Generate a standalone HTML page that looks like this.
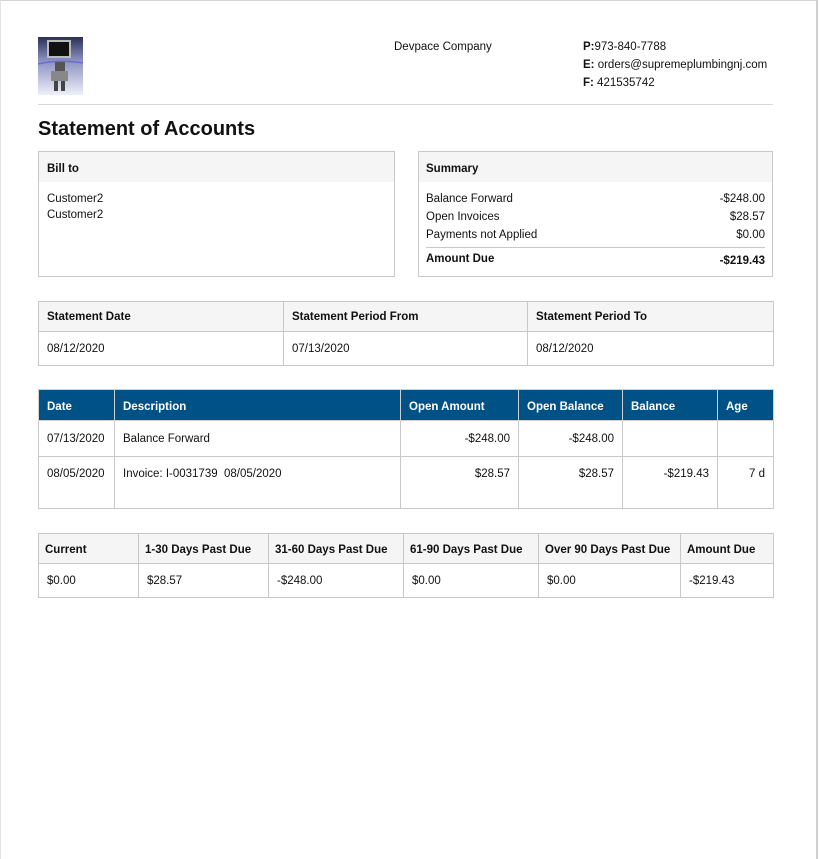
<!DOCTYPE html>
<html><head><meta charset="utf-8"><style>
*{margin:0;padding:0;box-sizing:border-box}
html,body{width:819px;height:859px;background:#fff;overflow:hidden}
body{font-family:"Liberation Sans",Arial,sans-serif;font-size:11.5px;color:#111;position:relative}
.frame{position:absolute;left:0;top:0;width:818px;height:859px;border-top:1px solid #d4d4d4;border-right:2px solid #cfcfcf;border-left:1px solid #e4e4e4}
.a{position:absolute;white-space:nowrap}
b{font-weight:bold}
.box{position:absolute;border:1px solid #c8c8c8}
.hd{position:absolute;left:0;right:0;top:0;height:30px;background:#f5f5f5}
table{position:absolute;border-collapse:collapse;table-layout:fixed}
td,th{border:1px solid #c8c8c8;padding:0 8px;text-align:left;white-space:nowrap;font-size:11.5px}
th{font-weight:bold;background:#f5f5f5}
.m th{background:#005186;color:#fff;border-color:#d0d0d0}
.r{text-align:right}
</style></head><body>
<div class="frame"></div>
<svg class="a" style="left:38px;top:37px" width="45" height="58" viewBox="0 0 45 58">
<defs><linearGradient id="g" x1="0" y1="0" x2="0" y2="1"><stop offset="0" stop-color="#2a2f55"/><stop offset="0.4" stop-color="#8a90c0"/><stop offset="1" stop-color="#eef0f8"/></linearGradient></defs>
<rect width="45" height="58" fill="url(#g)"/>
<rect x="9" y="3" width="24" height="18" fill="#bbb"/><rect x="11" y="5" width="20" height="14" fill="#111"/>
<path d="M0 27 Q22 22 45 26" stroke="#6a6ad0" stroke-width="1.5" fill="none"/>
<rect x="17" y="25" width="10" height="10" fill="#555"/><rect x="13" y="34" width="17" height="10" fill="#888"/>
<rect x="16" y="44" width="4" height="10" fill="#444"/><rect x="23" y="44" width="4" height="10" fill="#444"/>
</svg>
<div class="a" style="left:394px;top:41px">Devpace Company</div>
<div class="a" style="left:583px;top:41px"><b>P:</b>973-840-7788</div>
<div class="a" style="left:583px;top:59px"><b>E:</b> orders@supremeplumbingnj.com</div>
<div class="a" style="left:583px;top:77px"><b>F:</b> 421535742</div>
<div class="a" style="left:38px;top:104px;width:735px;height:1px;background:#d8d8d8"></div>
<div class="a" style="left:38px;top:118px;font-size:20px;font-weight:bold">Statement of Accounts</div>

<div class="box" style="left:38px;top:151px;width:357px;height:126px"><div class="hd"></div>
<div class="a" style="left:8px;top:11px"><b>Bill to</b></div>
<div class="a" style="left:8px;top:41px">Customer2</div>
<div class="a" style="left:8px;top:57px">Customer2</div></div>

<div class="box" style="left:418px;top:151px;width:355px;height:126px"><div class="hd"></div>
<div class="a" style="left:7px;top:11px"><b>Summary</b></div>
<div class="a" style="left:7px;top:41px">Balance Forward</div><div class="a" style="right:7px;top:41px">-$248.00</div>
<div class="a" style="left:7px;top:59px">Open Invoices</div><div class="a" style="right:7px;top:59px">$28.57</div>
<div class="a" style="left:7px;top:77px">Payments not Applied</div><div class="a" style="right:7px;top:77px">$0.00</div>
<div class="a" style="left:7px;right:7px;top:95px;height:1px;background:#c8c8c8"></div>
<div class="a" style="left:7px;top:101px"><b>Amount Due</b></div><div class="a" style="right:7px;top:103px"><b>-$219.43</b></div></div>

<table style="left:38px;top:301px;width:735px">
<colgroup><col style="width:245px"><col style="width:244px"><col style="width:246px"></colgroup>
<tr style="height:30px"><th>Statement Date</th><th>Statement Period From</th><th>Statement Period To</th></tr>
<tr style="height:34px"><td>08/12/2020</td><td>07/13/2020</td><td>08/12/2020</td></tr></table>

<table class="m" style="left:38px;top:389px;width:735px">
<colgroup><col style="width:76px"><col style="width:286px"><col style="width:118px"><col style="width:104px"><col style="width:95px"><col style="width:56px"></colgroup>
<tr style="height:31px"><th style="padding-top:3px">Date</th><th style="padding-top:3px">Description</th><th style="padding-top:3px">Open Amount</th><th style="padding-top:3px">Open Balance</th><th style="padding-top:3px">Balance</th><th style="padding-top:3px">Age</th></tr>
<tr style="height:36px"><td>07/13/2020</td><td>Balance Forward</td><td class="r">-$248.00</td><td class="r">-$248.00</td><td></td><td></td></tr>
<tr style="height:52px"><td style="vertical-align:top;padding-top:11px">08/05/2020</td><td style="vertical-align:top;padding-top:11px">Invoice: I-0031739&nbsp; 08/05/2020</td><td class="r" style="vertical-align:top;padding-top:11px">$28.57</td><td class="r" style="vertical-align:top;padding-top:11px">$28.57</td><td class="r" style="vertical-align:top;padding-top:11px">-$219.43</td><td class="r" style="vertical-align:top;padding-top:11px">7 d</td></tr></table>

<table style="left:38px;top:533px;width:735px">
<colgroup><col style="width:100px"><col style="width:130px"><col style="width:135px"><col style="width:135px"><col style="width:142px"><col style="width:93px"></colgroup>
<tr style="height:30px"><th style="padding-left:6px;padding-top:2px">Current</th><th style="padding-left:6px;padding-top:2px">1-30 Days Past Due</th><th style="padding-left:6px;padding-top:2px">31-60 Days Past Due</th><th style="padding-left:6px;padding-top:2px">61-90 Days Past Due</th><th style="padding-left:6px;padding-top:2px">Over 90 Days Past Due</th><th style="padding-left:6px;padding-top:2px">Amount Due</th></tr>
<tr style="height:34px"><td>$0.00</td><td>$28.57</td><td>-$248.00</td><td>$0.00</td><td>$0.00</td><td>-$219.43</td></tr></table>
</body></html>
